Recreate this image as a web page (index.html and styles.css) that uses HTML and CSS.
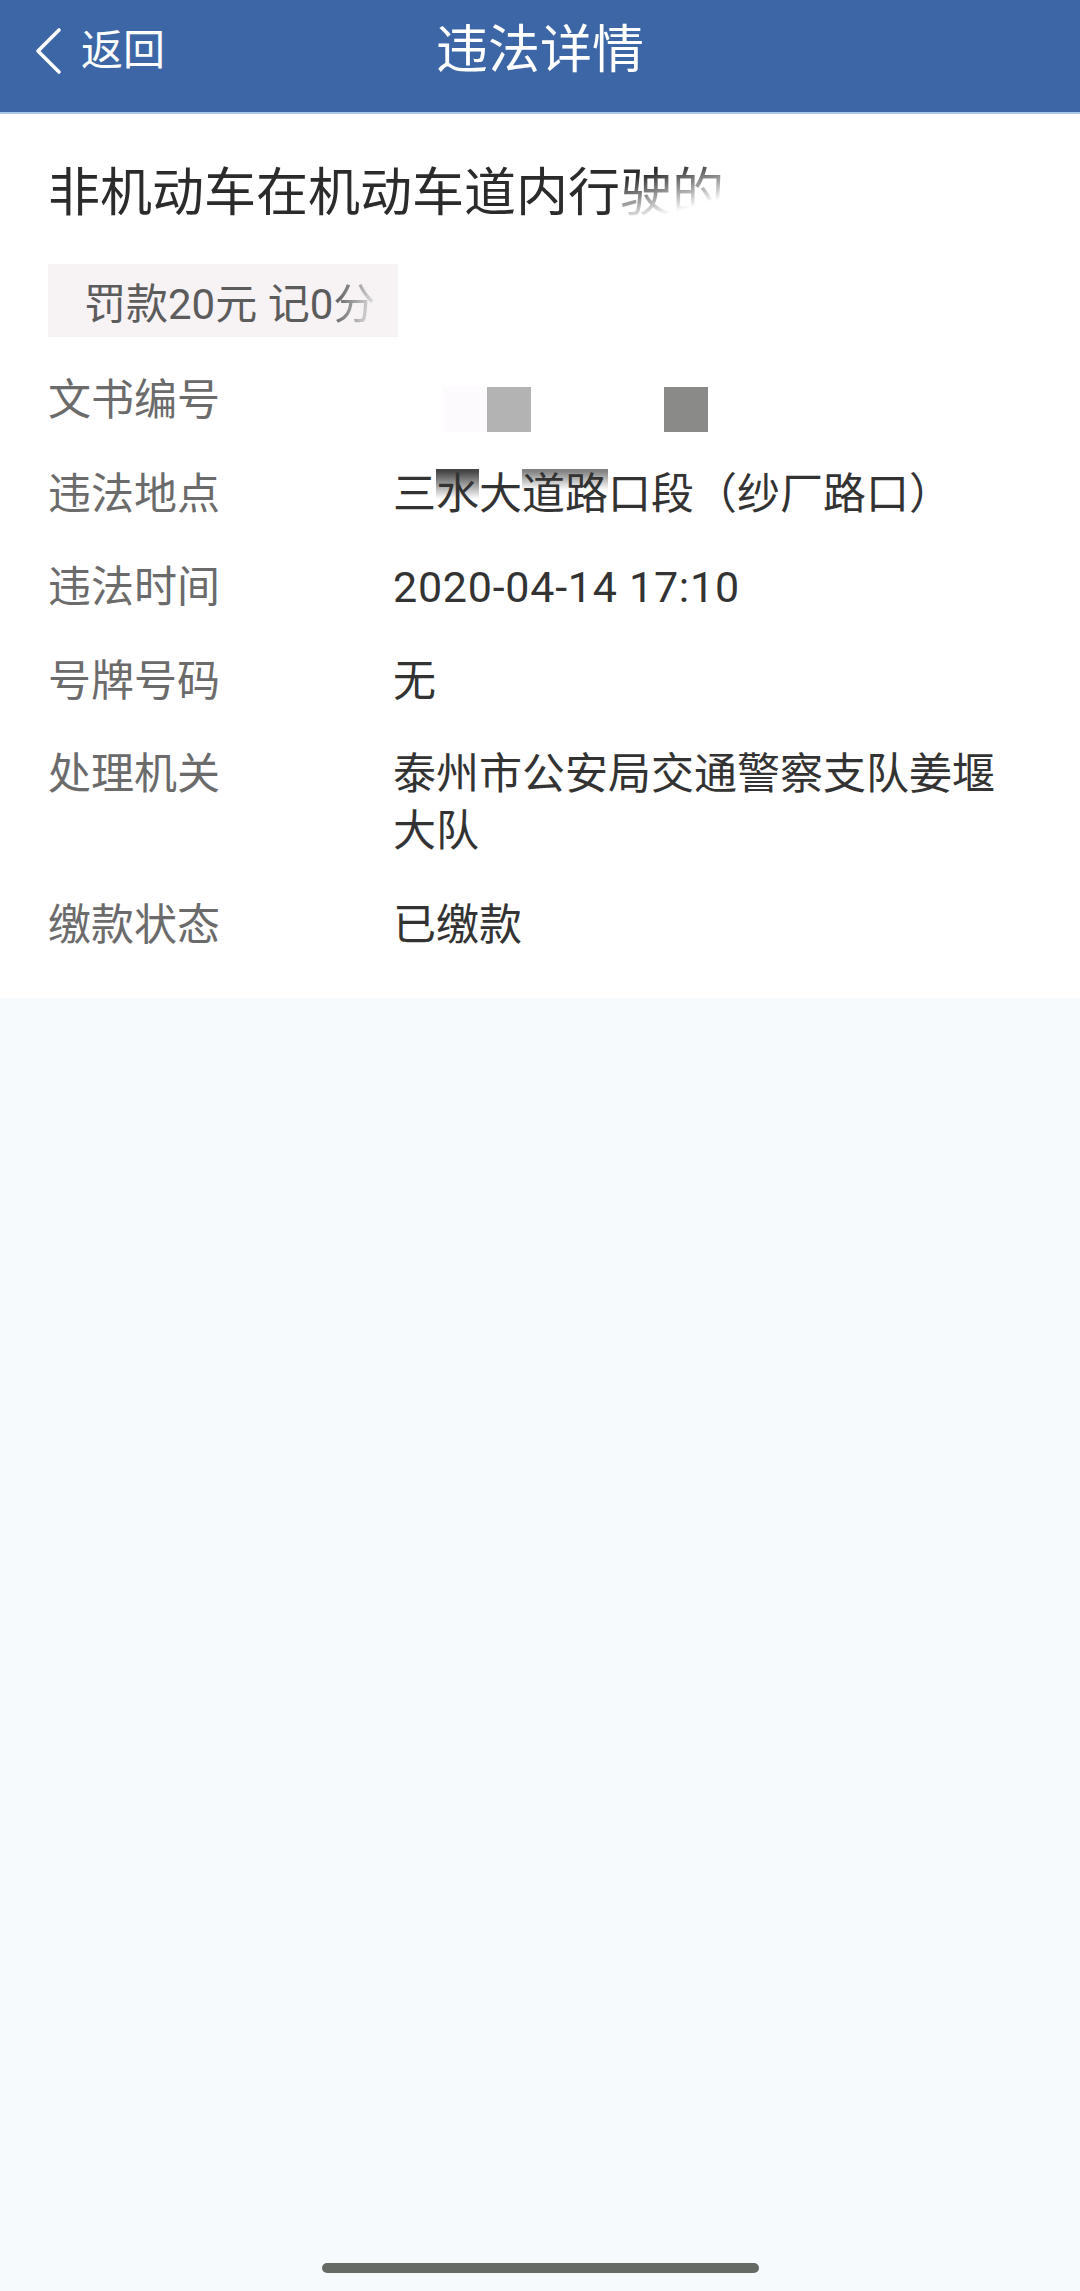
FILE: index.html
```html
<!DOCTYPE html>
<html lang="zh-CN">
<head>
<meta charset="utf-8">
<title>违法详情</title>
<link rel="stylesheet" href="styles.css">
</head>
<body>
<header class="topbar">
  <div class="back">
    <svg class="chev" width="28" height="48" viewBox="0 0 28 48"><polyline points="25,3 4,24 25,45" fill="none" stroke="#ffffff" stroke-width="3.6" stroke-linecap="round" stroke-linejoin="round"/></svg>
    <span class="back-text">返回</span>
  </div>
  <h1 class="bar-title">违法详情</h1>
  <div></div>
</header>
<main class="card">
  <h2 class="title">非机动车在机动车道内行<span class="fade">驶的</span></h2>
  <div class="fine">罚款20元 记0<span class="fade-r">分</span></div>
  <dl class="info">
    <dt>文书编号</dt>
    <dd class="redact"><span class="r r0"></span><span class="r r1"></span><span class="r r2"></span></dd>
    <dt>违法地点</dt>
    <dd>三<span class="m1">水</span>大<span class="m2">道路</span>口段（纱厂路口）</dd>
    <dt>违法时间</dt>
    <dd class="num">2020-04-14 17:10</dd>
    <dt>号牌号码</dt>
    <dd>无</dd>
    <dt>处理机关</dt>
    <dd>泰州市公安局交通警察支队姜堰大队</dd>
    <dt>缴款状态</dt>
    <dd>已缴款</dd>
  </dl>
</main>
<div class="rest"></div>
<div class="home"><span class="home-bar"></span></div>
</body>
</html>
```

FILE: styles.css
```css
* { box-sizing: border-box; }
html, body { margin: 0; padding: 0; }
body {
  min-height: 100vh;
  display: flex;
  flex-direction: column;
  background: #f7fafd;
  font-family: Roboto, "Noto Sans CJK SC", sans-serif;
  color: #333333;
}
.topbar {
  height: 114px;
  display: grid;
  grid-template-columns: 1fr auto 1fr;
  align-items: center;
  padding-bottom: 10px;
  background: #3c66a5;
  border-bottom: 2px solid #a9c6e6;
  color: #ffffff;
}
.back {
  display: flex;
  align-items: center;
  gap: 19px;
  padding-left: 34px;
}
.chev { display: block; }
.back-text {
  font-size: 42px;
  line-height: 1;
}
.bar-title {
  margin: 0;
  font-size: 52px;
  font-weight: 400;
  line-height: 1;
}
.card {
  background: #ffffff;
  padding: 44px 60px 44px 48px;
}
.title {
  margin: 0;
  font-size: 52px;
  font-weight: 400;
  line-height: 72px;
  color: #2b2b2b;
}
.fade {
  background: linear-gradient(165deg, #2b2b2b 20%, #ffffff 72%);
  -webkit-background-clip: text;
  background-clip: text;
  color: transparent;
}
.fine {
  display: inline-flex;
  align-items: center;
  height: 73px;
  margin-top: 34px;
  padding: 0 23px 0 36px;
  background: #f7f2f4;
  font-size: 42px;
  color: #5c5c5c;
}
.fade-r {
  background: linear-gradient(100deg, #6a6a6a 20%, #e2e2e2 90%);
  -webkit-background-clip: text;
  background-clip: text;
  color: transparent;
}
.info {
  display: grid;
  grid-template-columns: 345px 1fr;
  row-gap: 36.5px;
  margin: 35px 0 0;
  font-size: 43px;
  line-height: 57px;
}
.info dt { color: #6b6b6b; }
.info dd { margin: 0; color: #333333; }
.info .num { letter-spacing: 0.75px; }
.redact {
  display: flex;
  align-items: flex-start;
  padding-top: 15px;
  padding-left: 50px;
  height: 57px;
}
.r { display: block; width: 44px; height: 45px; }
.r0 { background: #fdfafd; }
.r1 { background: #b3b3b3; }
.r2 { background: #8a8b89; margin-left: 133px; }
.m1 {
  background: linear-gradient(to bottom, rgba(50,50,50,0.9) 5%, rgba(90,90,90,0) 60%);
}
.m2 {
  background: linear-gradient(to bottom, rgba(90,90,90,0.75) 5%, rgba(150,150,150,0) 42%);
}
.rest { flex: 1; }
.home {
  display: flex;
  justify-content: center;
  padding-bottom: 18px;
}
.home-bar {
  display: block;
  width: 437px;
  height: 10px;
  border-radius: 5px;
  background: #656a64;
}
```
